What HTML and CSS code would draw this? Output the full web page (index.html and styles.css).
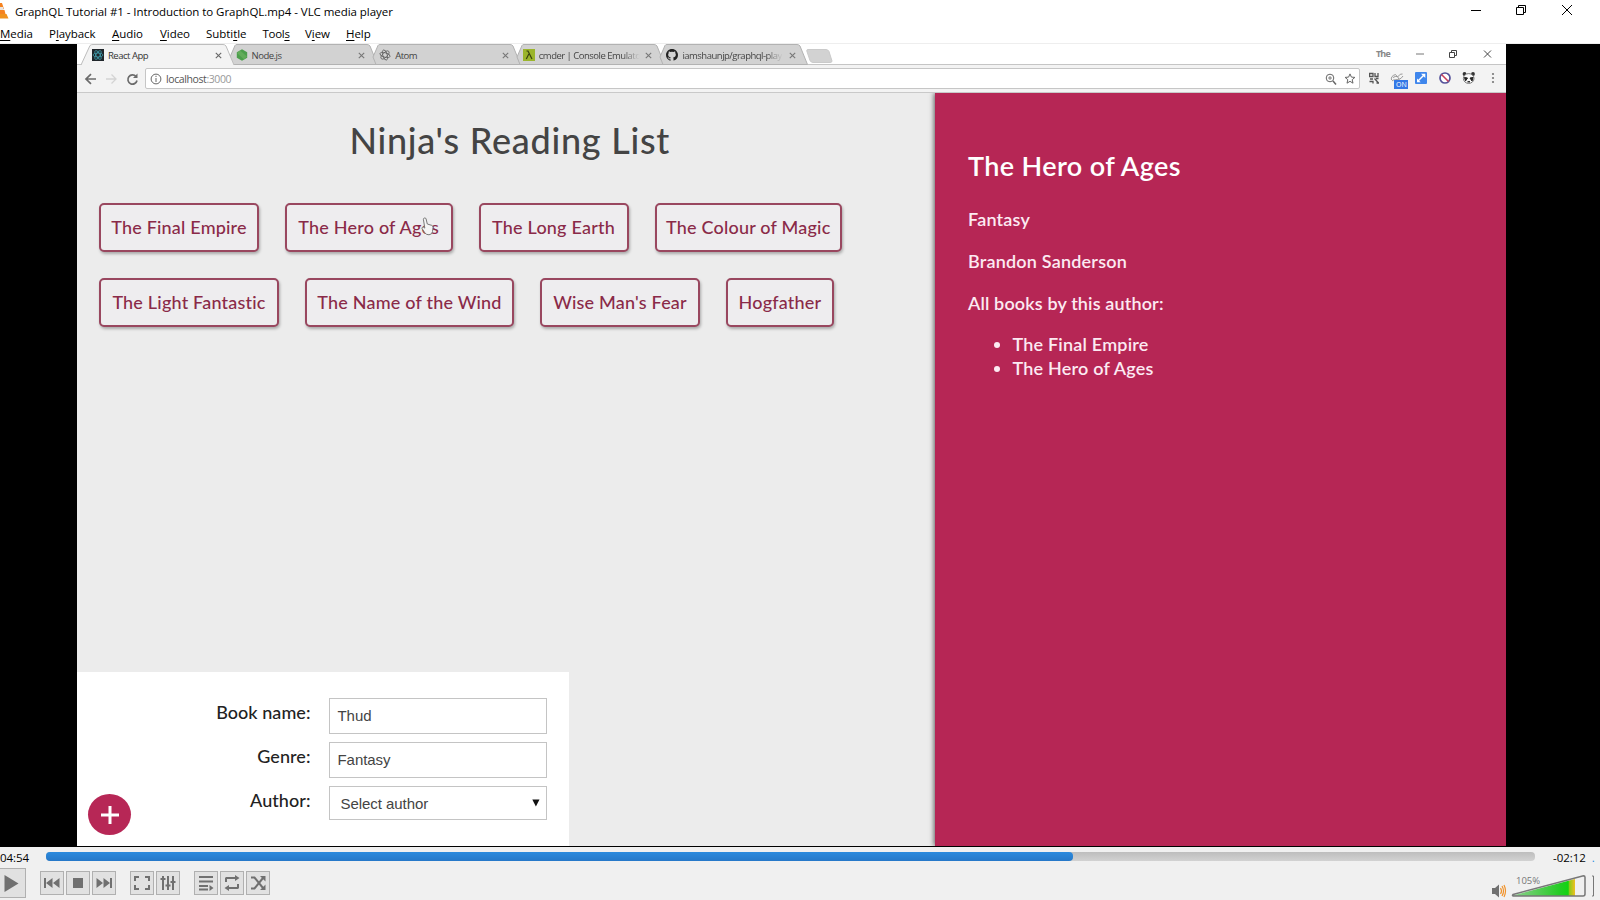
FILE: index.html
```
<!DOCTYPE html>
<html lang="en">
<head>
<meta charset="utf-8">
<title>GraphQL Tutorial #1 - VLC media player</title>
<link rel="stylesheet" href="styles.css">
</head>
<body>
<div class="player">
  <header class="titlebar">
    <svg class="cone" width="9" height="20" viewBox="0 0 9 20"><path d="M0 3h2l2 6H0z" fill="#f58220"/><path d="M0 7h3l1 4H0z" fill="#e8e4e0"/><path d="M0 10h4.500l1 4H0z" fill="#f58220"/><path d="M0 14h6.500l2 4.500H0z" fill="#f0921e"/></svg>
    <span class="title">GraphQL Tutorial #1 - Introduction to GraphQL.mp4 - VLC media player</span>
    <svg class="winctl" width="110" height="20" viewBox="0 0 110 20" fill="none" stroke="#000"><path d="M1 10.500h10M46.500 7.500h7v7h-7zM48.500 7.500v-2h7v7h-2M92 5l10 10M102 5l-10 10"/></svg>
  </header>
  <nav class="menu">
    <span class="m1"><u>M</u>edia</span><span class="m2">P<u>l</u>ayback</span><span class="m3"><u>A</u>udio</span><span class="m4"><u>V</u>ideo</span><span class="m5">Subti<u>t</u>le</span><span class="m6">Tool<u>s</u></span><span class="m7">V<u>i</u>ew</span><span class="m8"><u>H</u>elp</span>
  </nav>

  <main class="stage">
    <div class="screen">
      <div class="tabs">
        <div class="tab active">
          <svg class="shape" width="154" height="21" viewBox="0 0 154 21"><path d="M0 21L9 1.500Q10 .5 12 .5H142Q144 .5 145 2L153 21" fill="#f3f3f3" stroke="#bdbdbd"/></svg>
          <svg class="fav" width="12" height="12" viewBox="0 0 12 12"><rect width="12" height="12" fill="#20262b"/><g fill="none" stroke="#3e9aaa" stroke-width=".8"><ellipse cx="6" cy="6" rx="5" ry="2"/><ellipse cx="6" cy="6" rx="5" ry="2" transform="rotate(60 6 6)"/><ellipse cx="6" cy="6" rx="5" ry="2" transform="rotate(120 6 6)"/></g></svg>
          <span class="tl">React App</span><svg class="x" width="7" height="7" viewBox="0 0 7 7"><path d="M.8.8l5.400 5.400M6.200.8L.8 6.200" stroke="#666" stroke-width="1.100"/></svg>
        </div>
        <div class="tab">
          <svg class="shape" width="154" height="21" viewBox="0 0 154 21"><path d="M8 20.500L5 13L10 1.500Q10.500.5 12 .5H142Q144 .5 145 2L152.500 20.500z" fill="#d2d2d2" stroke="#b2b2b2"/></svg>
          <svg class="fav" width="12" height="12" viewBox="0 0 12 12"><path d="M6 .3l5.200 2.900v5.600l-5.200 2.900-5.200-2.900V3.200z" fill="#4c9e4c"/><path d="M4 1.600l7 6-3 2.900L1 4z" fill="#77b968" opacity=".5"/></svg>
          <span class="tl">Node.js</span><svg class="x" width="7" height="7" viewBox="0 0 7 7"><path d="M.8.8l5.400 5.400M6.200.8L.8 6.200" stroke="#777" stroke-width="1.100"/></svg>
        </div>
        <div class="tab">
          <svg class="shape" width="154" height="21" viewBox="0 0 154 21"><path d="M8 20.500L5 13L10 1.500Q10.500.5 12 .5H142Q144 .5 145 2L152.500 20.500z" fill="#d2d2d2" stroke="#b2b2b2"/></svg>
          <svg class="fav" width="12" height="12" viewBox="0 0 12 12" fill="none" stroke="#666" stroke-width=".9"><ellipse cx="6" cy="6" rx="5.200" ry="2.200" transform="rotate(15 6 6)"/><ellipse cx="6" cy="6" rx="5.200" ry="2.200" transform="rotate(75 6 6)"/><ellipse cx="6" cy="6" rx="5.200" ry="2.200" transform="rotate(135 6 6)"/></svg>
          <span class="tl">Atom</span><svg class="x" width="7" height="7" viewBox="0 0 7 7"><path d="M.8.8l5.400 5.400M6.200.8L.8 6.200" stroke="#777" stroke-width="1.100"/></svg>
        </div>
        <div class="tab">
          <svg class="shape" width="154" height="21" viewBox="0 0 154 21"><path d="M8 20.500L5 13L10 1.500Q10.500.5 12 .5H142Q144 .5 145 2L152.500 20.500z" fill="#d2d2d2" stroke="#b2b2b2"/></svg>
          <svg class="fav" width="12" height="12" viewBox="0 0 12 12"><rect width="12" height="12" fill="#9bb52c"/><path d="M3.500 2h1.500l4 8M5.800 5L3.300 10" fill="none" stroke="#39430f" stroke-width="1.200"/></svg>
          <span class="tl fade">cmder | Console Emulato</span><svg class="x" width="7" height="7" viewBox="0 0 7 7"><path d="M.8.8l5.400 5.400M6.200.8L.8 6.200" stroke="#777" stroke-width="1.100"/></svg>
        </div>
        <div class="tab">
          <svg class="shape" width="154" height="21" viewBox="0 0 154 21"><path d="M8 20.500L5 13L10 1.500Q10.500.5 12 .5H142Q144 .5 145 2L152.500 20.500z" fill="#d2d2d2" stroke="#b2b2b2"/></svg>
          <svg class="fav" width="12" height="12" viewBox="0 0 16 16"><path fill="#222" d="M8 0C3.580 0 0 3.580 0 8c0 3.540 2.290 6.530 5.470 7.590.4.070.55-.17.55-.38v-1.490c-2.230.48-2.700-1.070-2.700-1.070-.36-.92-.89-1.170-.89-1.170-.72-.5.060-.48.060-.48.800.05 1.220.82 1.220.82.710 1.210 1.860.86 2.320.66.070-.52.280-.86.500-1.060-1.770-.2-3.640-.89-3.640-3.950 0-.87.310-1.590.82-2.150-.08-.2-.36-1.020.08-2.120 0 0 .67-.21 2.200.82a7.700 7.700 0 0 1 4 0c1.530-1.040 2.200-.82 2.200-.82.440 1.100.16 1.920.08 2.120.51.560.82 1.270.82 2.150 0 3.070-1.870 3.750-3.650 3.950.29.250.54.730.54 1.480v2.200c0 .21.150.46.550.38A8 8 0 0 0 16 8c0-4.420-3.580-8-8-8z"/></svg>
          <span class="tl fade">iamshaunjp/graphql-play</span><svg class="x" width="7" height="7" viewBox="0 0 7 7"><path d="M.8.8l5.400 5.400M6.200.8L.8 6.200" stroke="#777" stroke-width="1.100"/></svg>
        </div>
        <svg class="newtab" width="28" height="14" viewBox="0 0 28 14"><path d="M2 .5H20q2 0 3 2L26 12q0 1.500-2 1.500H7q-2 0-3-2L.8 2Q.5.5 2 .5z" fill="#d2d2d2" stroke="#cacaca"/></svg>
        <span class="user">The</span>
        <svg class="cctl" width="76" height="10" viewBox="0 0 76 10" fill="none" stroke="#444"><path d="M0 5h8" stroke="#777"/><path d="M33.500 3.500h5v5h-5zM35.500 3.500v-2h5v5h-2M68 1.500l7 7M75 1.500l-7 7"/></svg>
      </div>

      <div class="toolbar">
        <svg class="nav" width="60" height="14" viewBox="0 0 60 14" fill="none" stroke="#6b6b6b" stroke-width="1.700"><path d="M13 7H3.500M8 2.200L3 7l5 4.800"/><path d="M23 7h10M28.500 2.500L33 7l-4.500 4.500" stroke="#d4d4d4" stroke-width="1.300"/><path d="M53 4.500A4.600 4.600 0 1 0 54 8.500"/><path d="M54.500 1.500v4.500H50z" fill="#6b6b6b" stroke="none"/></svg>
        <div class="url">
          <svg width="12" height="12" viewBox="0 0 12 12" fill="none" stroke="#666"><circle cx="6" cy="6" r="4.900"/><path d="M6 5v4M6 2.800v1.200"/></svg>
          <span class="host">localhost<i>:3000</i></span>
          <svg class="urlr" width="32" height="12" viewBox="0 0 32 12" fill="none" stroke="#666"><circle cx="5" cy="5" r="3.800"/><path d="M3 5h4M5 3v4" stroke-width=".8"/><path d="M8 8l3 3.400" stroke-width="1.500"/><path d="M25 .9l1.400 3.200 3.500.3-2.700 2.300.8 3.500-3-1.900-3 1.900.8-3.500-2.700-2.300 3.500-.3z"/></svg>
        </div>
        <svg class="ext" width="132" height="22" viewBox="0 0 132 22"><g fill="none" stroke="#555" stroke-width="1.300"><path d="M.5 5.500h3.500v3H.5zM6 5v3.500h3V5M1 11h3M.5 13.500h3.500v2M5.500 10.500l4 4.500M9.500 10.500H7M7.500 15h2.500"/></g><g fill="none" stroke="#999"><path d="M22.500 12q-1-4 4-5.500l2 2.500q3-4 5-3M23 13c3-3 7 1 11-5M24 9.500q5-3 6 2"/></g><rect x="25" y="12" width="14" height="9" fill="#3479e6"/><rect x="46" y="4" width="12" height="12" rx="1" fill="#3f86ec"/><path d="M48.500 13.500l7-7" fill="none" stroke="#fff" stroke-width="1.500"/><path d="M52 5.700h4.300V10zM48 10.500v3.700h3.700z" fill="#fff"/><circle cx="76" cy="10" r="5" fill="#fff" stroke="#55529a" stroke-width="1.700"/><path d="M72.500 6.500l7 7" stroke="#c9405c" stroke-width="1.600"/><circle cx="95.500" cy="6" r="1.900" fill="#333"/><circle cx="104" cy="6" r="1.900" fill="#333"/><ellipse cx="99.700" cy="10.500" rx="5.300" ry="4.900" fill="#f8f8f8" stroke="#777"/><path d="M95.500 9.500l3 .5-2 3zM104 9.500l-3 .5 2 3z" fill="#222" stroke="#222"/><path d="M98.500 13h2.500v1.500h-2.500z" fill="#333"/><g fill="#777"><circle cx="124" cy="6" r="1.100"/><circle cx="124" cy="10" r="1.100"/><circle cx="124" cy="14" r="1.100"/></g><text x="27" y="19.200" class="on">ON</text></svg>
      </div>

      <div class="app">
        <section class="list">
          <h1>Ninja's Reading List</h1>
          <div class="row">
            <div class="book b1">The Final Empire</div><div class="book b2">The Hero of Ages</div><div class="book b3">The Long Earth</div><div class="book b4">The Colour of Magic</div>
          </div>
          <div class="row">
            <div class="book b5">The Light Fantastic</div><div class="book b6">The Name of the Wind</div><div class="book b7">Wise Man's Fear</div><div class="book b8">Hogfather</div>
          </div>
          <form class="add">
            <div class="plus"><svg width="18" height="18" viewBox="0 0 18 18"><path d="M9 0v18M0 9h18" stroke="#fff" stroke-width="3"/></svg></div>
            <div class="field"><label>Book name:</label><div class="input">Thud</div></div>
            <div class="field"><label>Genre:</label><div class="input">Fantasy</div></div>
            <div class="field"><label>Author:</label><div class="input select"><span>Select author</span><svg width="8" height="8" viewBox="0 0 8 8"><path d="M.3.5h7.200L3.900 7.500z" fill="#111"/></svg></div></div>
          </form>
        </section>
        <aside class="details">
          <h2>The Hero of Ages</h2>
          <p class="genre">Fantasy</p>
          <p>Brandon Sanderson</p>
          <p class="all">All books by this author:</p>
          <ul><li>The Final Empire</li><li>The Hero of Ages</li></ul>
        </aside>
      </div>
      <svg class="hand" width="14" height="20" viewBox="0 0 14 20"><path d="M3.500 1q1.300-.3 1.600 1l1.200 5 4.500 1.400q1.400.7 1.200 2.100l-.5 4q-.3 3-3.500 3.300-3 .2-4.500-2.500L1 11.500q-.3-1.500 1.300-1.400l1.500 1L2.400 2.300Q2.400 1.200 3.500 1z" fill="#f4f4f4" stroke="#777"/></svg>
    </div>
  </main>

  <footer class="controls">
    <div class="seek">
      <span class="time">04:54</span>
      <div class="track"><div class="played"></div></div>
      <span class="remain">-02:12</span><span class="dot">.</span>
    </div>
    <div class="buttons">
      <div class="btn play"><svg width="24" height="24" viewBox="0 0 24 24"><path d="M3.500 4l14 8.500-14 8.500z"/></svg></div>
      <div class="group g1">
        <div class="btn"><svg width="20" height="20" viewBox="0 0 20 20"><path d="M2 5h2v10H2zM10.500 5v10L4 10zM17.500 5v10L11 10z"/></svg></div>
        <div class="btn"><svg width="20" height="20" viewBox="0 0 20 20"><path d="M5 5h10v10H5z"/></svg></div>
        <div class="btn"><svg width="20" height="20" viewBox="0 0 20 20"><path d="M18 5h-2v10h2zM9.500 5v10L16 10zM2.500 5v10L9 10z"/></svg></div>
      </div>
      <div class="group g2">
        <div class="btn"><svg width="20" height="20" viewBox="0 0 20 20"><path d="M2 3h5v2H4v3H2zM13 3h5v5h-2V5h-3zM2 12h2v3h3v2H2zM16 12h2v5h-5v-2h3z"/></svg></div>
        <div class="btn"><svg width="20" height="20" viewBox="0 0 20 20"><path d="M4 3h2v14H4zM9 3h2v14H9zM14 3h2v14h-2zM2.500 5h5v2h-5zM7.500 11.500h5v2h-5zM12.500 8h5v2h-5z"/></svg></div>
      </div>
      <div class="group g3">
        <div class="btn"><svg width="20" height="20" viewBox="0 0 20 20"><path d="M3 3h14v2H3zM3 7.500h14v2H3zM3 12h9v2H3zM3 15.500h9v2H3zM13.500 12l4 3-4 3z"/></svg></div>
        <div class="btn"><svg width="20" height="20" viewBox="0 0 20 20"><path d="M4 4h9V2l4.500 3L13 8V6H5v3H3V5zM16 16H7v2l-4.500-3L7 12v2h8v-3h2v4z"/></svg></div>
        <div class="btn"><svg width="20" height="20" viewBox="0 0 20 20"><path d="M3 4.500h3.500L15 15M3 15.500h3.500L15 5" fill="none" stroke="#707070" stroke-width="2"/><path d="M12 3h5.500v5.500zM12 17h5.500v-5.500z"/></svg></div>
      </div>
      <svg class="volume" width="110" height="30" viewBox="0 0 110 30">
        <defs><linearGradient id="vol"><stop offset="0" stop-color="#8fce8f"/><stop offset=".75" stop-color="#25cc25"/><stop offset=".89" stop-color="#12d312"/><stop offset=".91" stop-color="#8ec919"/><stop offset="1" stop-color="#f0c020"/></linearGradient></defs>
        <g transform="translate(0 4.500)"><path d="M2 13.500h3l4-3.500v13l-4-3.500H2z" fill="#707070"/><path d="M10.500 13.500q2 3 0 6M12 11.500q3 5 0 10M14 10.500q3 6 0 12" fill="none" stroke="#f0922a" stroke-width="1.200"/></g>
        <path d="M23 25.500L85 9v17H23z" fill="url(#vol)"/><path d="M23 24.500L93.500 5.800q1.500 0 1.500 1.500V24q0 2-2 2H24.500q-3 0-1.500-1.500z" fill="none" stroke="#777" stroke-width="1.500"/><path d="M102 6h1.500v20H102" fill="none" stroke="#777"/>
        <text x="26" y="14" class="pct">105%</text>
      </svg>
    </div>
  </footer>
</div>
</body>
</html>
```
FILE: styles.css
```
* { box-sizing: border-box; }
body { margin: 0; background: #000; }
.player { width: 1600px; height: 900px; display: flex; flex-direction: column; overflow: hidden; font-family: "Open Sans", sans-serif; font-size: 11.500px; letter-spacing: -.05px; color: #000; }
.titlebar { height: 23px; background: #fff; display: flex; align-items: flex-start; flex: none; }
.cone { flex: none; }
.title { margin-left: 6px; line-height: 24px; white-space: nowrap; }
.winctl { margin-left: auto; margin-right: 20px; }
.menu { height: 21px; flex: none; background: #fff; display: flex; line-height: 22px; border-bottom: 1px solid #eee; white-space: nowrap; }
.menu span { flex: none; }
.menu u { text-underline-offset: 2px; }
.m1 { width: 49px; } .m2 { width: 63px; } .m3 { width: 48px; } .m4 { width: 46px; }
.m5 { width: 56.500px; } .m6 { width: 42.500px; letter-spacing: -.3px; } .m7 { width: 41px; }
.stage { height: 803px; flex: none; background: #000; padding: 0 94px 0 77px; }
.screen { position: relative; height: 802px; display: flex; flex-direction: column; background: #ececec; }
.tabs { height: 21px; flex: none; background: #fff; display: flex; padding-left: 4px; border-bottom: 1px solid #c5c5c5; }
.tab { position: relative; width: 143.600px; height: 21px; flex: none; display: flex; align-items: center; padding: 1px 0 0 11px; font-size: 9.500px; letter-spacing: -.5px; color: #444; }
.tab > * { position: relative; }
.tab .shape { position: absolute; left: 0; top: 0; }
.active { z-index: 2; color: #333; }
.tl { margin-left: 4px; width: 105px; white-space: nowrap; flex: none; }
.x { margin-left: 1.500px; flex: none; }
.fade { -webkit-mask-image: linear-gradient(90deg, #000 80%, transparent 96%); mask-image: linear-gradient(90deg, #000 80%, transparent 96%); }
.newtab { margin: 5px 0 0 7px; }
.user { margin-left: auto; font-size: 9px; line-height: 20px; color: #888; font-weight: 700; letter-spacing: -.8px; margin-right: 26px; }
.cctl { margin: 5px 14px 0 0; }
.toolbar { height: 28px; flex: none; display: flex; align-items: center; background: #f3f3f3; border-bottom: 1px solid #c9c9c9; padding-left: 6px; }
.nav { flex: none; margin-right: 2px; }
.url { width: 1215px; height: 21px; background: #fff; border: 1px solid #c6c6c6; border-radius: 2px; display: flex; align-items: center; padding: 0 2px 0 4px; font-size: 10.500px; letter-spacing: -.4px; color: #555; }
.host { margin-left: 4px; }
.host i { font-style: normal; color: #999; }
.urlr { margin-left: auto; }
.ext { margin-left: 8.500px; }
.on { font: 7px "Open Sans", sans-serif; fill: #fff; }
.app { flex: 1; display: flex; font-family: Lato, sans-serif; font-size: 18px; letter-spacing: .2px; min-height: 0; overflow: hidden; }
.list { width: 857.500px; flex: none; display: flex; flex-direction: column; }
h1 { margin: 23px 0 38px 8px; height: 49px; font-size: 36px; line-height: 49px; letter-spacing: .74px; font-weight: 500; color: #444; text-align: center; white-space: nowrap; }
.row { display: flex; gap: 26px; margin: 0 0 26px 22px; }
.book { height: 49px; padding-bottom: 1px; border: 2px solid #99475f; border-radius: 5px; color: #8a2a48; font-weight: 500; display: flex; align-items: center; justify-content: center; box-shadow: 1px 2px 3px rgba(0,0,0,.28); white-space: nowrap; background: #eeedef; }
.b1 { width: 160px; } .b2 { width: 167.500px; } .b3 { width: 150px; } .b4 { width: 187.500px; }
.b5 { width: 180px; } .b6 { width: 209px; } .b7 { width: 160px; } .b8 { width: 108px; }
.add { width: 491.500px; height: 174px; margin-top: auto; background: #fff; padding: 26px 22px 0 0; display: flex; flex-direction: column; gap: 8px; position: relative; }
.field { display: flex; justify-content: flex-end; height: 36px; flex: none; }
.field label { margin-right: 18px; line-height: 29px; letter-spacing: .05px; color: #222; font-weight: 500; }
.input { width: 218px; height: 36px; border: 1px solid #c4c4c4; padding: 0 8px; font: 15px/34px "Liberation Sans", sans-serif; letter-spacing: -.05px; color: #444; }
.select { height: 34px; padding: 0 6px 0 11px; line-height: 33px; display: flex; justify-content: space-between; align-items: center; }
.plus { position: absolute; left: 11px; top: 122px; width: 43px; height: 41px; border-radius: 50%; background: #b72756; display: flex; align-items: center; justify-content: center; }
.details { flex: 1; background: #b62655; color: #fceaf2; font-weight: 600; padding: 56px 33px 0 33.500px; box-shadow: -1px 0 5px rgba(0,0,0,.6); white-space: nowrap; }
h2 { margin: 0; font-size: 27px; line-height: 34px; letter-spacing: .38px; font-weight: 600; color: #fff; }
.details p { margin: 18px 0 0; line-height: 23.800px; }
.details .genre { margin-top: 25px; }
.details .all { letter-spacing: .14px; }
.details ul { margin: 17px 0 0; padding-left: 44.500px; line-height: 24px; }
.hand { position: absolute; left: 344px; top: 173px; }
.controls { flex: 1; background: #f0f0f0; display: flex; flex-direction: column; }
.seek { display: flex; height: 20px; padding-top: 5px; line-height: 12px; white-space: nowrap; }
.time { width: 45.500px; }
.track { width: 1489.500px; height: 9px; border-radius: 4px; background: linear-gradient(#bdbdbd, #d2d2d2); flex: none; }
.played { width: 1027.500px; height: 9px; border-radius: 4px; background: linear-gradient(#2b8ade, #2678c8); }
.remain { margin-left: 18px; }
.dot { margin-left: 6px; color: #2b8ade; }
.buttons { display: flex; height: 32px; align-items: center; }
.btn { width: 24px; height: 24px; border: 1px solid #b0b0b0; background: #e1e1e1; display: flex; align-items: center; justify-content: center; flex: none; fill: #707070; }
.play { width: 26px; height: 30px; border-left: 0; margin-right: 14px; }
.group { display: flex; gap: 2px; margin-right: 14px; }
.volume { margin-left: auto; align-self: flex-start; margin-top: 3px; }
.pct { font: 9.500px "Open Sans", sans-serif; fill: #777; }
```
